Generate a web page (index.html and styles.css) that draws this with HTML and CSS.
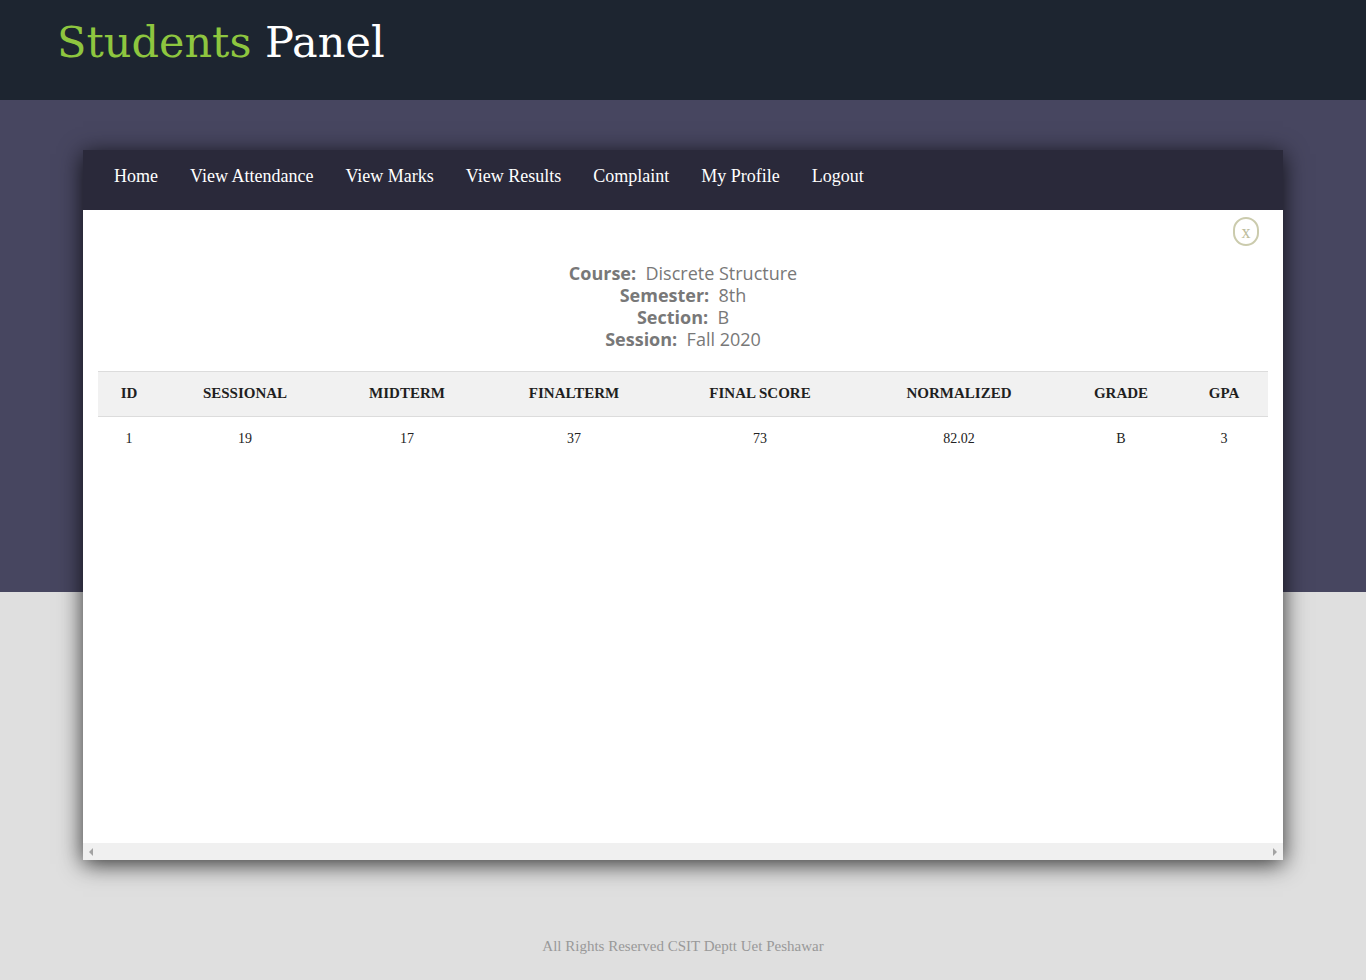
FILE: index.html
```html
<!DOCTYPE html>
<html>
<head>
<meta charset="utf-8">
<title>Students Panel</title>
<link rel="stylesheet" href="styles.css">
</head>
<body>
<header class="top">
  <h1 class="brand"><span class="brand-green">Students</span> Panel</h1>
</header>
<main class="stage">
  <section class="card">
    <nav class="nav">
      <a href="#">Home</a>
      <a href="#">View Attendance</a>
      <a href="#">View Marks</a>
      <a href="#">View Results</a>
      <a href="#">Complaint</a>
      <a href="#">My Profile</a>
      <a href="#">Logout</a>
    </nav>
    <div class="card-body">
      <div class="close-row"><button class="close">x</button></div>
      <div class="info">
        <div><b>Course:</b>&nbsp; Discrete Structure</div>
        <div><b>Semester:</b>&nbsp; 8th</div>
        <div><b>Section:</b>&nbsp; B</div>
        <div><b>Session:</b>&nbsp; Fall 2020</div>
      </div>
      <table class="results">
        <colgroup>
          <col class="c1"><col class="c2"><col class="c3"><col class="c4">
          <col class="c5"><col class="c6"><col class="c7"><col class="c8">
        </colgroup>
        <thead>
          <tr><th>ID</th><th>SESSIONAL</th><th>MIDTERM</th><th>FINALTERM</th><th>FINAL SCORE</th><th>NORMALIZED</th><th>GRADE</th><th>GPA</th></tr>
        </thead>
        <tbody>
          <tr><td>1</td><td>19</td><td>17</td><td>37</td><td>73</td><td>82.02</td><td>B</td><td>3</td></tr>
        </tbody>
      </table>
    </div>
    <div class="hscroll">
      <span class="arrow-left"></span>
      <span class="arrow-right"></span>
    </div>
  </section>
</main>
<footer class="foot">All Rights Reserved CSIT Deptt Uet Peshawar</footer>
</body>
</html>
```
FILE: styles.css
```css
* { box-sizing: border-box; }
html, body { margin: 0; padding: 0; }
body {
  background: #dfdfdf;
  font-family: "Liberation Serif", "Times New Roman", serif;
  min-height: 980px;
}
.top {
  height: 100px;
  background: #1d2530;
  padding: 0 57px;
}
.brand {
  margin: 0;
  font-family: "DejaVu Serif", Georgia, serif;
  font-weight: normal;
  font-size: 43px;
  line-height: 84px;
  color: #ffffff;
}
.brand-green { color: #8ec63f; }
.stage {
  background: linear-gradient(#474660 0, #474660 492px, #dfdfdf 492px);
  padding: 50px 0 0;
}
.card {
  width: 1200px;
  height: 710px;
  margin: 0 auto;
  background: #fff;
  box-shadow: 0 4px 22px rgba(0, 0, 0, 0.8);
  display: flex;
  flex-direction: column;
}
.nav {
  height: 60px;
  background: #2a293a;
  display: flex;
  align-items: center;
  padding: 0 15px 8px;
}
.nav a {
  color: #fff;
  text-decoration: none;
  font-size: 18px;
  padding: 0 16px;
  line-height: 40px;
}
.card-body {
  flex: 1;
  padding: 0 15px;
}
.close-row {
  display: flex;
  justify-content: flex-end;
  padding: 7px 9px 0 0;
}
.close {
  width: 26px;
  height: 29px;
  border: 2px solid #cbcbad;
  border-radius: 13px;
  background: #fff;
  color: #bdbd9c;
  font-family: "Liberation Serif", serif;
  font-size: 18px;
  line-height: 20px;
  padding: 0;
}
.info {
  margin-top: 16px;
  text-align: center;
  font-family: "Open Sans", "Noto Sans", sans-serif;
  font-size: 18px;
  line-height: 22px;
  color: #787878;
}
.info b { font-weight: 700; }
.results {
  margin-top: 21px;
  width: 1170px;
  border-collapse: collapse;
  table-layout: fixed;
}
.c1 { width: 62px; }
.c2 { width: 170px; }
.c3 { width: 154px; }
.c4 { width: 180px; }
.c5 { width: 192px; }
.c6 { width: 206px; }
.c7 { width: 118px; }
.c8 { width: 88px; }
.results th {
  background: #f1f1f1;
  border-top: 1px solid #dcdcdc;
  border-bottom: 1px solid #dcdcdc;
  height: 45px;
  font-size: 15px;
  font-weight: bold;
  color: #1f1f1f;
  text-align: center;
  padding: 0 0 2px;
}
.results td {
  height: 45px;
  font-size: 14px;
  color: #222;
  text-align: center;
  padding: 0;
}
.hscroll {
  height: 17px;
  background: #f0f0f0;
  display: flex;
  justify-content: space-between;
  align-items: center;
  padding: 0 6px;
}
.arrow-left {
  width: 0; height: 0;
  border-top: 4px solid transparent;
  border-bottom: 4px solid transparent;
  border-right: 4px solid #a3a3a3;
}
.arrow-right {
  width: 0; height: 0;
  border-top: 4px solid transparent;
  border-bottom: 4px solid transparent;
  border-left: 4px solid #a3a3a3;
}
.foot {
  text-align: center;
  color: #999;
  font-size: 15px;
  padding-top: 78px;
}
```
